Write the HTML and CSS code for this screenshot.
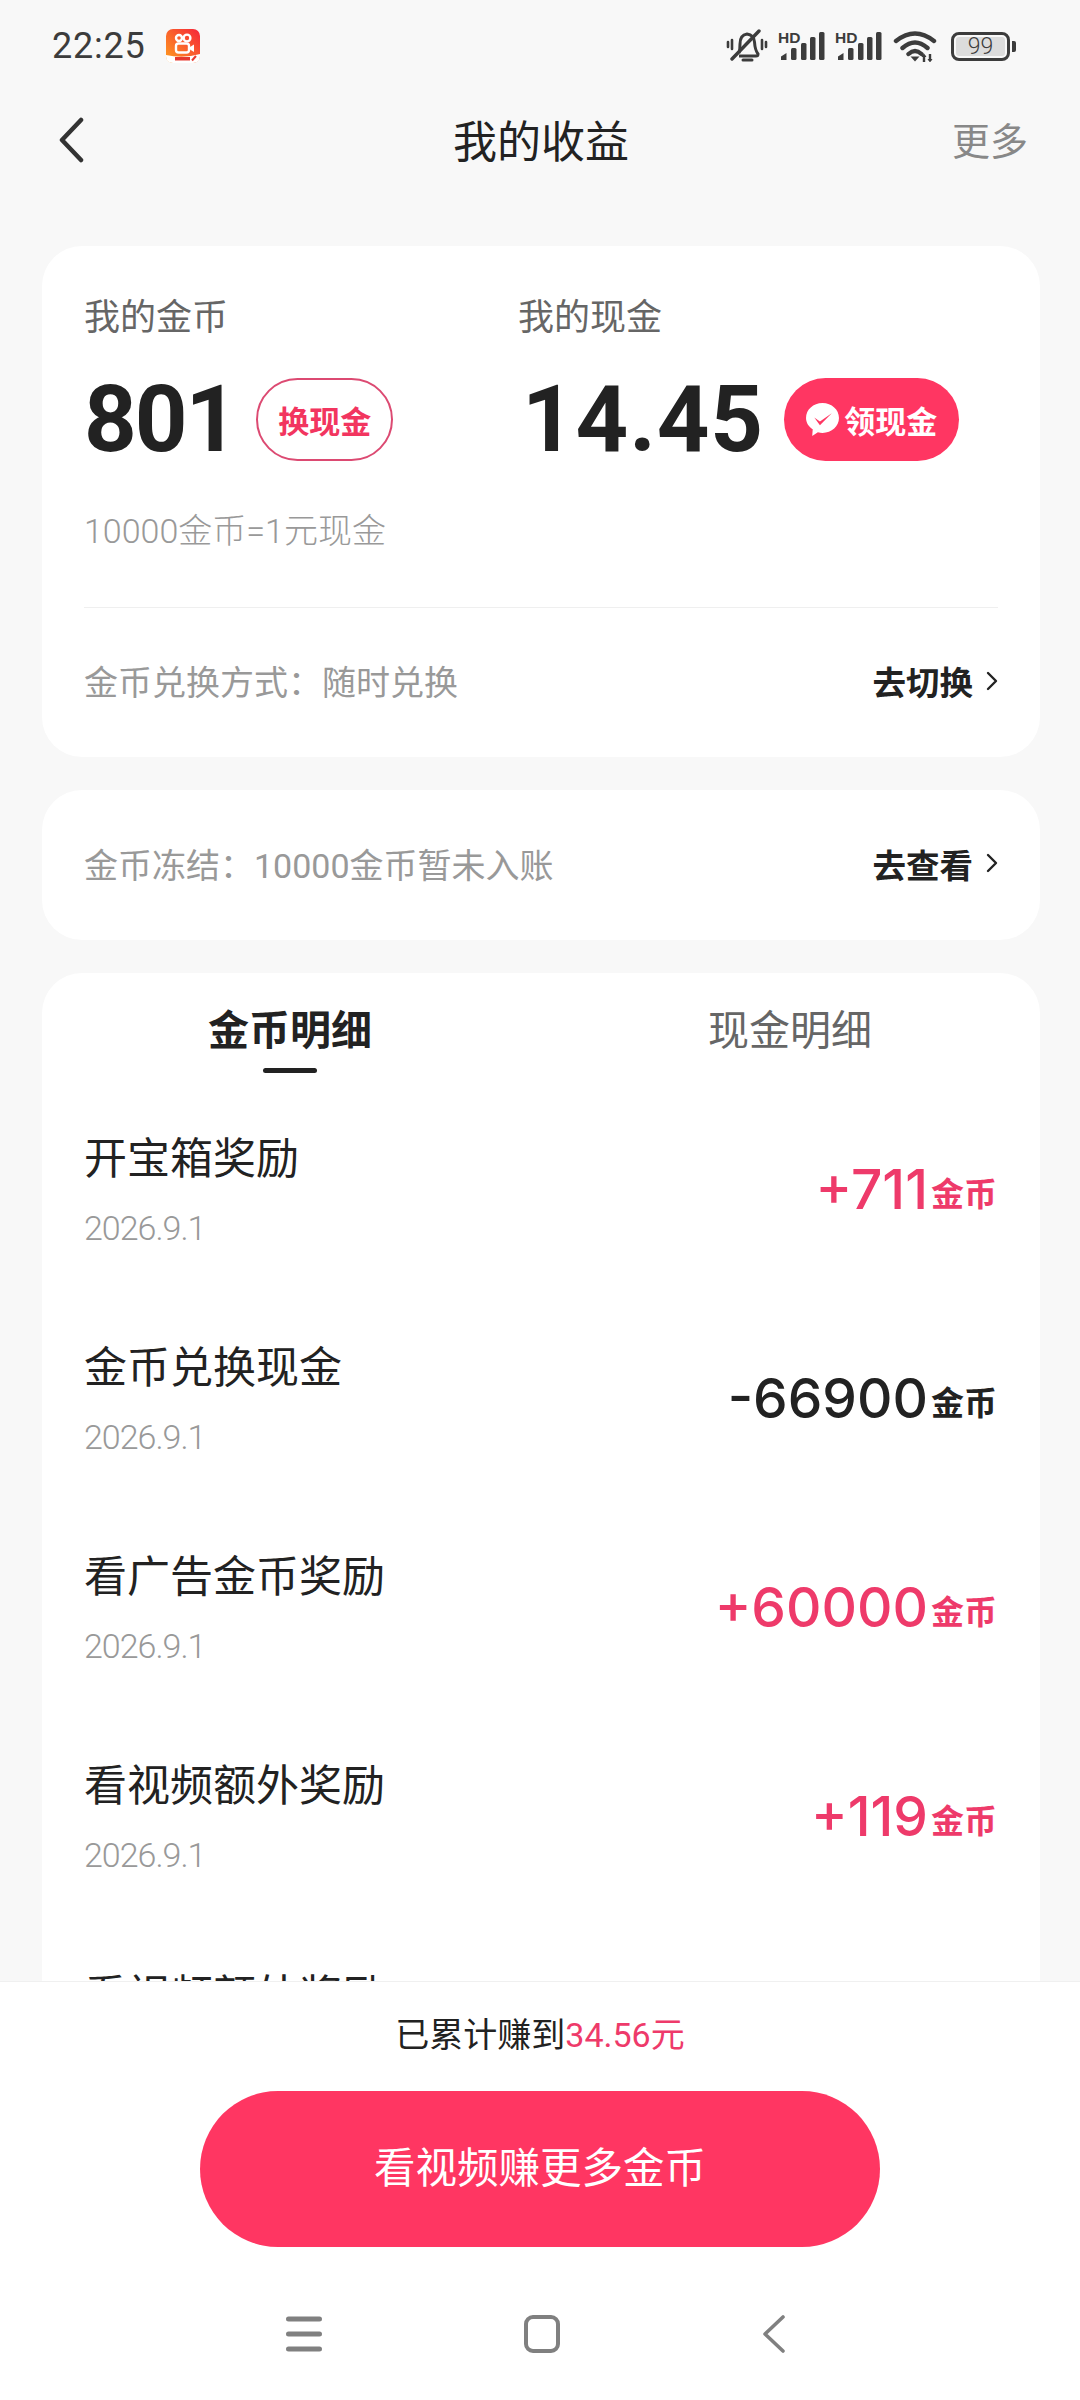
FILE: index.html
```html
<!DOCTYPE html>
<html lang="zh-CN">
<head>
  <meta charset="UTF-8">
  <meta name="viewport" content="width=device-width, initial-scale=1.0">
  <title>我的收益</title>
  <link rel="stylesheet" href="styles.css">
</head>
<body>
<div class="page">

  <!-- Status bar -->
  <div class="status-bar">
    <div class="status-left">
      <span class="clock">22:25</span>
      <svg class="app-logo" viewBox="0 0 34 34" width="34" height="34">
        <defs>
          <linearGradient id="logoGrad" x1="0" y1="1" x2="1" y2="0">
            <stop offset="0" stop-color="#ffa01e"/>
            <stop offset="1" stop-color="#f5243a"/>
          </linearGradient>
        </defs>
        <rect width="34" height="34" rx="7" fill="url(#logoGrad)"/>
        <path d="M0 26 Q17 30 34 25 V27 Q34 34 27 34 H7 Q0 34 0 27 Z" fill="#fff"/>
        <circle cx="13" cy="9" r="3" fill="none" stroke="#fff" stroke-width="2.4"/>
        <circle cx="21" cy="9" r="3.4" fill="none" stroke="#fff" stroke-width="2.4"/>
        <rect x="10" y="14.5" width="13" height="9" rx="2.5" fill="none" stroke="#fff" stroke-width="2.4"/>
        <path d="M24 18 L28 15.5 V23 L24 20.5 Z" fill="#fff"/>
        <rect x="9" y="28" width="15" height="3.5" fill="#e8392f"/>
        <path d="M26 31.5 L30 27" stroke="#e8392f" stroke-width="2"/>
      </svg>
    </div>
    <div class="status-right">
      <svg class="icon-bell" viewBox="0 0 42 34" width="42" height="34">
        <path d="M13 24 Q14 21 14 15 Q14 6 21 5 Q28 6 28.500 13 Q29 21 32 25 Q32 27 30 27 H13" fill="none" stroke="#3c3c3c" stroke-width="3"/>
        <path d="M17 31 H26" stroke="#3c3c3c" stroke-width="3" stroke-linecap="round"/>
        <path d="M6 30 L33 2" stroke="#3c3c3c" stroke-width="3.400" stroke-linecap="round"/>
        <path d="M6 11 V20 M2 13 V18 M36 11 V20 M40 13 V18" stroke="#3c3c3c" stroke-width="2.600" stroke-linecap="round"/>
      </svg>
      <svg class="icon-signal" viewBox="0 0 47 32" width="47" height="32">
        <text x="0" y="13" class="hd-text">HD</text>
        <path d="M3 30 V26.500 L8.500 23 V30 Z" fill="#3c3c3c"/>
        <rect x="13" y="18" width="5.500" height="12" rx="1.500" fill="#3c3c3c"/>
        <rect x="23" y="13" width="5.500" height="17" rx="1.500" fill="#3c3c3c"/>
        <rect x="32" y="7" width="5.500" height="23" rx="1.500" fill="#3c3c3c"/>
        <rect x="41" y="2" width="5.500" height="28" rx="1.500" fill="#3c3c3c"/>
      </svg>
      <svg class="icon-signal" viewBox="0 0 47 32" width="47" height="32">
        <text x="0" y="13" class="hd-text">HD</text>
        <path d="M3 30 V26.500 L8.500 23 V30 Z" fill="#3c3c3c"/>
        <rect x="13" y="18" width="5.500" height="12" rx="1.500" fill="#3c3c3c"/>
        <rect x="23" y="13" width="5.500" height="17" rx="1.500" fill="#3c3c3c"/>
        <rect x="32" y="7" width="5.500" height="23" rx="1.500" fill="#3c3c3c"/>
        <rect x="41" y="2" width="5.500" height="28" rx="1.500" fill="#3c3c3c"/>
      </svg>
      <svg class="icon-wifi" viewBox="0 0 44 32" width="44" height="32">
        <path d="M3 11 Q22 -4 41 11 M9.500 18 Q22 7 34.500 18 M15.500 24 Q22 18 28.500 24" fill="none" stroke="#3c3c3c" stroke-width="4.400" stroke-linecap="round"/>
        <path d="M17.500 26.500 H26.500 L22 31.500 Z" fill="#3c3c3c"/>
        <path d="M31 25 V32 M37 24 V31" stroke="#3c3c3c" stroke-width="2.400"/>
        <path d="M28.500 27 L31 23.500 L33.500 27 Z M34.500 29 L37 32.500 L39.500 29 Z" fill="#3c3c3c"/>
      </svg>
      <div class="battery">
        <div class="battery-body"><span class="battery-level">99</span></div>
        <div class="battery-nub"></div>
      </div>
    </div>
  </div>

  <!-- Title bar -->
  <div class="title-bar">
    <svg class="back-icon" viewBox="0 0 26 46" width="26" height="46">
      <path d="M23 3 L4 23 L23 43" fill="none" stroke="#333" stroke-width="4.500" stroke-linecap="round" stroke-linejoin="round"/>
    </svg>
    <h1 class="page-title">我的收益</h1>
    <span class="more-link">更多</span>
  </div>

  <!-- Scrolling content, cut off by the footer -->
  <div class="content">

    <div class="card balance-card">
      <div class="balance-top">
        <div class="balance-col coin-col">
          <div class="balance-label">我的金币</div>
          <div class="balance-row">
            <span class="balance-num coin-num">801</span>
            <span class="pill pill-outline">换现金</span>
          </div>
        </div>
        <div class="balance-col">
          <div class="balance-label">我的现金</div>
          <div class="balance-row">
            <span class="balance-num cash-num">14.45</span>
            <span class="pill pill-solid">
              <svg class="pill-icon" viewBox="0 0 34 34" width="35" height="35">
                <path d="M17 1 C26 1 33 7.500 33 15.500 C33 23.500 26 30 17 30 C15.500 30 14 29.800 12.500 29.400 L7 33 L7.500 26.500 C3.500 24 1 20 1 15.500 C1 7.500 8 1 17 1 Z" fill="#fff"/>
                <path d="M9 15 L14.500 19 L26 11 L14.500 22.500 Z" fill="#ff3662"/>
              </svg>
              领现金
            </span>
          </div>
        </div>
      </div>
      <div class="rate-note">10000金币=1元现金</div>
      <div class="card-line has-divider">
        <span class="line-text">金币兑换方式：随时兑换</span>
        <span class="line-link">去切换
          <svg class="chevron" viewBox="0 0 12 20" width="12" height="20"><path d="M2 2 L10 10 L2 18" fill="none" stroke="#222" stroke-width="2.400" stroke-linecap="round" stroke-linejoin="round"/></svg>
        </span>
      </div>
    </div>

    <div class="card frozen-card">
      <div class="card-line">
        <span class="line-text">金币冻结：10000金币暂未入账</span>
        <span class="line-link">去查看
          <svg class="chevron" viewBox="0 0 12 20" width="12" height="20"><path d="M2 2 L10 10 L2 18" fill="none" stroke="#222" stroke-width="2.400" stroke-linecap="round" stroke-linejoin="round"/></svg>
        </span>
      </div>
    </div>

    <div class="card detail-card">
      <div class="tabs">
        <div class="tab active">金币明细</div>
        <div class="tab">现金明细</div>
      </div>

      <div class="record">
        <div class="record-info">
          <div class="record-title">开宝箱奖励</div>
          <div class="record-date">2026.9.1</div>
        </div>
        <div class="record-amount plus"><span class="amount-num">+711</span><span class="amount-unit">金币</span></div>
      </div>
      <div class="record">
        <div class="record-info">
          <div class="record-title">金币兑换现金</div>
          <div class="record-date">2026.9.1</div>
        </div>
        <div class="record-amount"><span class="amount-num">-66900</span><span class="amount-unit">金币</span></div>
      </div>
      <div class="record">
        <div class="record-info">
          <div class="record-title">看广告金币奖励</div>
          <div class="record-date">2026.9.1</div>
        </div>
        <div class="record-amount plus"><span class="amount-num">+60000</span><span class="amount-unit">金币</span></div>
      </div>
      <div class="record">
        <div class="record-info">
          <div class="record-title">看视频额外奖励</div>
          <div class="record-date">2026.9.1</div>
        </div>
        <div class="record-amount plus"><span class="amount-num">+119</span><span class="amount-unit">金币</span></div>
      </div>
      <!-- Only the top of this row shows above the footer -->
      <div class="record record-partial">
        <div class="record-info">
          <div class="record-title">看视频额外奖励</div>
        </div>
      </div>
    </div>
  </div>

  <!-- Footer -->
  <div class="footer">
    <div class="total-note">已累计赚到<span class="total-value">34.56元</span></div>
    <div class="cta-button">看视频赚更多金币</div>
    <div class="nav-bar">
      <svg viewBox="0 0 36 36" width="36" height="36">
        <path d="M2.500 3 H33.500 M2.500 18 H33.500 M2.500 33 H33.500" stroke="#808080" stroke-width="5" stroke-linecap="round"/>
      </svg>
      <svg viewBox="0 0 36 38" width="36" height="38">
        <rect x="2" y="2" width="32" height="34" rx="7" fill="none" stroke="#808080" stroke-width="4"/>
      </svg>
      <svg viewBox="0 0 24 38" width="24" height="38">
        <path d="M21 2 L3 19 L21 36" fill="none" stroke="#808080" stroke-width="3.600" stroke-linecap="round" stroke-linejoin="round"/>
      </svg>
    </div>
  </div>

</div>
</body>
</html>
```

FILE: styles.css
```css
/* General Reset */
* {
  margin: 0;
  padding: 0;
  box-sizing: border-box;
}

body {
  font-family: "Roboto", "Noto Sans CJK SC", sans-serif;
  background-color: #f8f8f8;
  color: #222;
}

.page {
  width: 1080px;
  height: 2400px;
  display: flex;
  flex-direction: column;
  overflow: hidden;
}

/* Status Bar */
.status-bar {
  height: 92px;
  padding: 0 64px 0 52px;
  display: flex;
  justify-content: space-between;
  align-items: center;
  flex-shrink: 0;
}

.status-left {
  display: flex;
  align-items: center;
  gap: 20px;
}

.clock {
  font-size: 36px;
  color: #3c3c3c;
  letter-spacing: 0.8px;
}

.status-right {
  display: flex;
  align-items: center;
  gap: 10px;
}

.hd-text {
  font-family: "Liberation Sans", sans-serif;
  font-size: 15.5px;
  font-weight: 700;
  fill: #3c3c3c;
}

.icon-wifi {
  margin-left: 1px;
}

.battery {
  display: flex;
  align-items: center;
  gap: 2px;
  margin-left: 4px;
}

.battery-body {
  width: 59px;
  height: 29px;
  border: 3px solid #3c3c3c;
  border-radius: 8px;
  padding: 2px;
  display: flex;
}

.battery-level {
  flex: 1;
  background-color: #dcdcdc;
  border-radius: 3px;
  font-size: 23px;
  font-weight: 300;
  line-height: 19px;
  text-align: center;
  color: #3c3c3c;
}

.battery-nub {
  width: 4px;
  height: 11px;
  background-color: #3c3c3c;
  border-radius: 0 2px 2px 0;
}

/* Title Bar */
.title-bar {
  height: 96px;
  padding: 0 52px 0 58px;
  display: flex;
  justify-content: space-between;
  align-items: center;
  position: relative;
  flex-shrink: 0;
}

.page-title {
  position: absolute;
  left: 2px;
  right: 0;
  margin-bottom: 2px;
  text-align: center;
  font-size: 44px;
  font-weight: 400;
  color: #222;
}

.more-link {
  margin-bottom: 4px;
  font-size: 38px;
  color: #888;
}

/* Cards */
.content {
  flex: 1;
  min-height: 0;
  overflow: hidden;
  padding: 58px 40px 0 42px;
  display: flex;
  flex-direction: column;
  gap: 33px;
}

.card {
  background-color: #fff;
  border-radius: 40px;
  flex-shrink: 0;
}

.balance-card {
  height: 511px;
  padding: 50px 42px 0 42px;
}

.balance-top {
  display: flex;
}

.balance-col {
  display: flex;
  flex-direction: column;
}

.coin-col {
  width: 434px;
}

.balance-label {
  font-size: 36px;
  line-height: 44px;
  color: #666;
}

.balance-row {
  margin-top: 37px;
  display: flex;
  align-items: center;
  gap: 20px;
  height: 84px;
}

.balance-num {
  padding-top: 2px;
  font-size: 92px;
  font-weight: 700;
  line-height: 84px;
  color: #222;
}

.coin-num {
  letter-spacing: -2px;
}

.cash-num {
  margin-left: 4px;
  letter-spacing: 0.8px;
}

.pill {
  height: 83px;
  border-radius: 42px;
  display: flex;
  align-items: center;
  justify-content: center;
  font-size: 31px;
  font-weight: 700;
}

.pill-outline {
  width: 137px;
  border: 2px solid #dc4a72;
  color: #f2355f;
}

.pill-solid {
  width: 175px;
  background-color: #ff3662;
  color: #fff;
  gap: 4px;
}

.rate-note {
  margin-top: 48px;
  font-size: 34px;
  line-height: 44px;
  font-weight: 300;
  color: #999;
}

.card-line {
  display: flex;
  justify-content: space-between;
  align-items: center;
}

.has-divider {
  margin-top: 54px;
  height: 150px;
  padding-bottom: 4px;
  border-top: 1px solid #efefef;
}

.frozen-card {
  height: 150px;
  padding: 0 42px 0 42px;
}

.frozen-card .card-line {
  height: 150px;
  padding-bottom: 4px;
}

.line-text {
  font-size: 34px;
  color: #999;
}

.line-link {
  display: flex;
  align-items: center;
  gap: 13px;
  font-size: 33.5px;
  font-weight: 700;
  color: #222;
}

/* Tabs and records */
.detail-card {
  padding: 0 43px 0 42px;
  border-radius: 40px 40px 0 0;
}

.tabs {
  height: 111px;
  display: flex;
  justify-content: center;
  margin-left: -1px;
}

.tab {
  width: 500px;
  flex-shrink: 0;
  text-align: center;
  font-size: 41px;
  line-height: 116px;
  color: #666;
  position: relative;
}

.tab.active {
  font-weight: 700;
  color: #222;
}

.tab.active::after {
  content: "";
  position: absolute;
  left: 50%;
  bottom: 11px;
  width: 54px;
  height: 5px;
  margin-left: -27px;
  border-radius: 3px;
  background-color: #222;
}

.record {
  height: 209px;
  display: flex;
  justify-content: space-between;
  align-items: center;
}

.record-partial {
  align-items: flex-start;
  padding-top: 46px;
}

.record-info {
  padding-top: 2px;
}

.record-title {
  font-size: 43px;
  line-height: 56px;
  color: #222;
}

.record-date {
  margin-top: 20px;
  font-size: 34px;
  line-height: 42px;
  font-weight: 300;
  letter-spacing: -1px;
  color: #999;
}

.record-amount {
  display: flex;
  align-items: flex-end;
  gap: 3px;
  color: #222;
}

.record-amount.plus {
  color: #ee3a6a;
}

.amount-num {
  font-family: "Inter", "Roboto", sans-serif;
  font-size: 55px;
  font-weight: 500;
  line-height: 56px;
}

.amount-unit {
  margin-bottom: 2px;
  font-size: 33px;
  font-weight: 700;
  line-height: 40px;
}

/* Footer */
.footer {
  height: 419px;
  flex-shrink: 0;
  background-color: #fff;
  border-top: 1px solid #f0f0f0;
  display: flex;
  flex-direction: column;
  align-items: center;
}

.total-note {
  margin-top: 31px;
  font-size: 34px;
  line-height: 44px;
  color: #222;
}

.total-value {
  color: #ee3a6a;
}

.cta-button {
  margin-top: 34px;
  width: 680px;
  height: 156px;
  border-radius: 78px;
  background-color: #ff3662;
  color: #fff;
  font-size: 41.500px;
  text-align: center;
  line-height: 156px;
}

.nav-bar {
  margin-top: 68px;
  margin-left: -8px;
  width: 500px;
  display: flex;
  justify-content: space-between;
  align-items: center;
}
```
